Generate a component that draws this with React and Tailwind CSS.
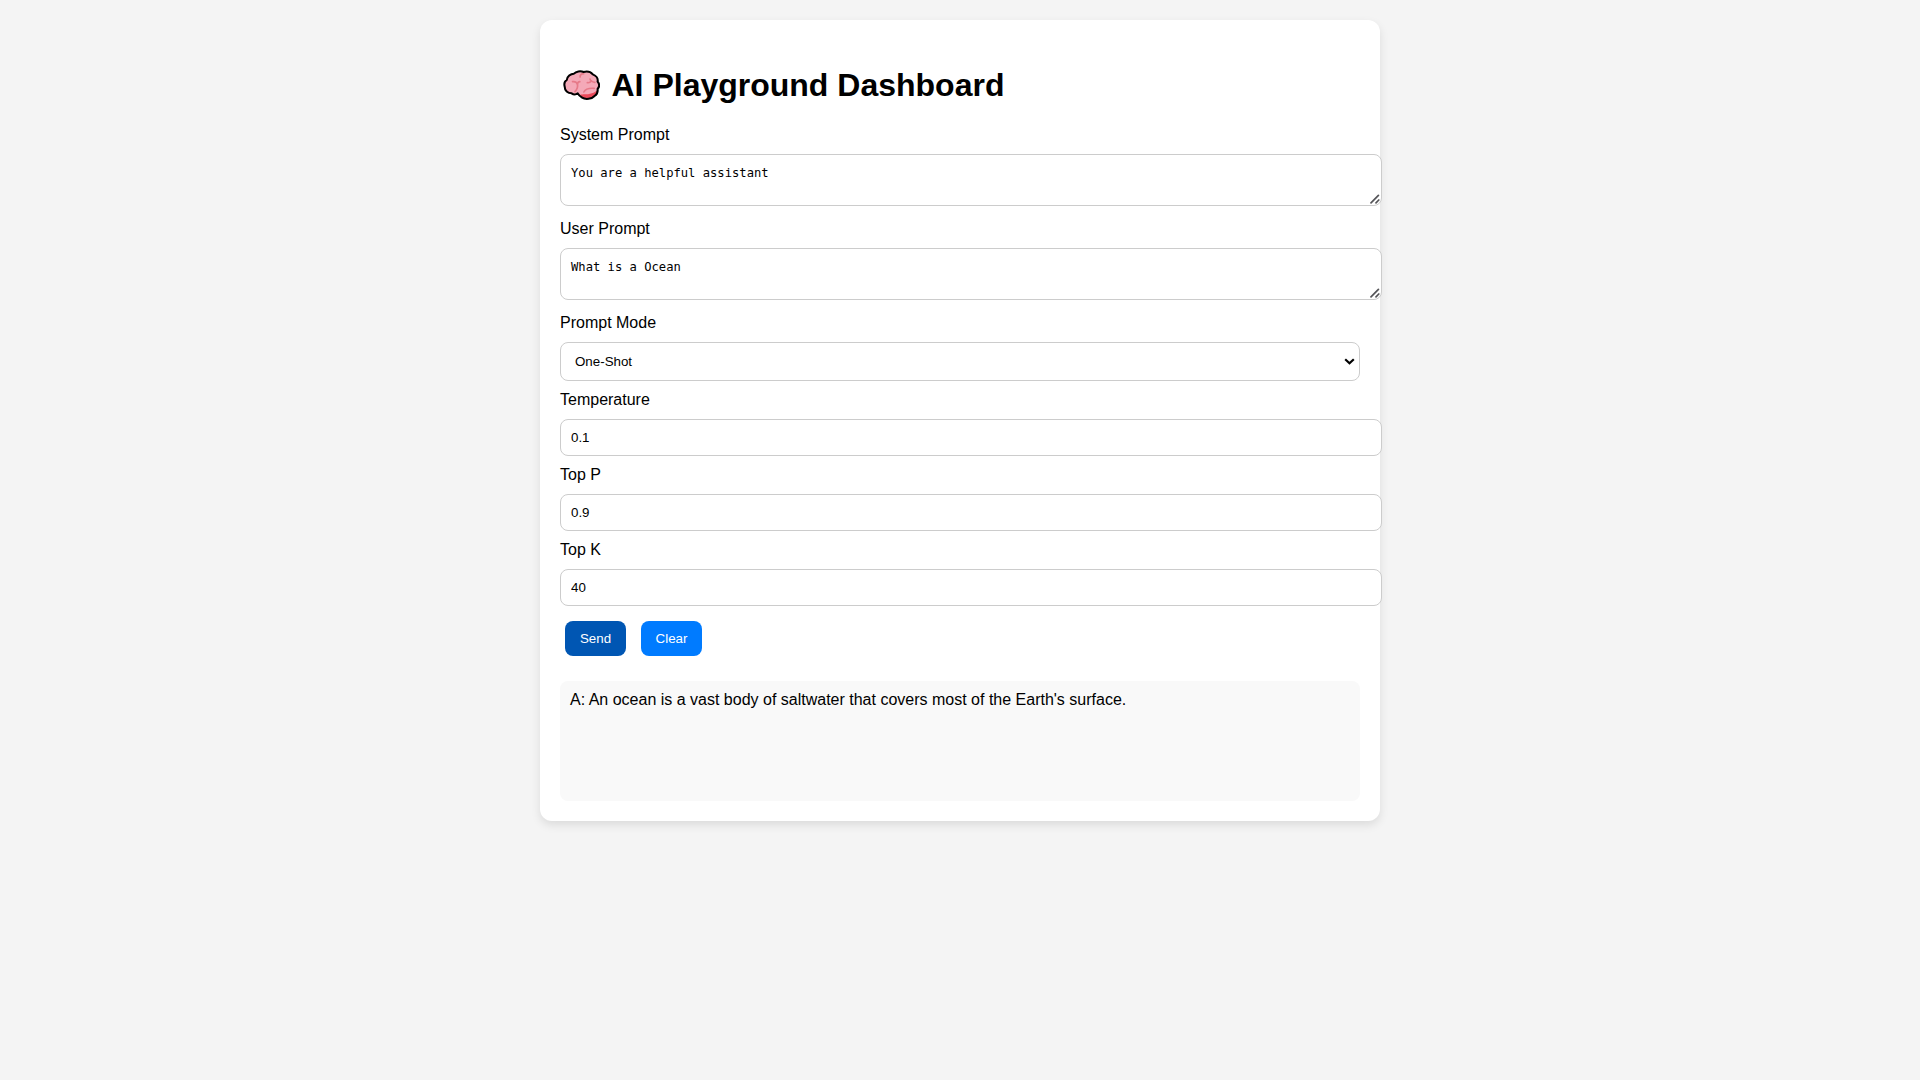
import React from "react";

function BrainIcon() {
  return (
    <svg className="block h-[30px] w-[37px] shrink-0" viewBox="0 0 108 90" preserveAspectRatio="none" fill="none">
      <path
        d="M5 50 C2 39 6 33 11 30 C12 20 22 11 32 11 C38 4 51 2 60 6 C70 3 81 6 87 13 C97 17 103 26 101 35 C107 42 106 51 101 57 C102 66 99 74 92 78 C84 87 66 90 56 83 C50 79 46 76 43 70 C37 75 29 73 25 70 C14 70 5 62 5 50 Z"
        fill="#f4a9b8"
      />
      <path d="M49 75 C56 72 66 73 73 73 C85 71 95 66 100 61 C101 68 98 75 92 79 C80 88 60 88 49 75 Z" fill="#ea4a5a" />
      <g stroke="#e67a89" strokeWidth="5" strokeLinecap="round" strokeLinejoin="round">
        <path d="M28 35 C34 34 40 37 42 42 C43 37 45 35 49 35" />
        <path d="M42 42 C44 50 41 58 35 65" />
        <path d="M60 11 C54 11 49 15 50 21" />
        <path d="M79 27 C80 34 87 36 93 37" />
        <path d="M83 33 C80 37 76 39 71 38" />
        <path d="M61 66 C66 56 78 54 91 55" />
      </g>
      <path
        d="M5 50 C2 39 6 33 11 30 C12 20 22 11 32 11 C38 4 51 2 60 6 C70 3 81 6 87 13 C97 17 103 26 101 35 C107 42 106 51 101 57 C102 66 99 74 92 78 C84 87 66 90 56 83 C50 79 46 76 43 70 C37 75 29 73 25 70 C14 70 5 62 5 50 Z"
        stroke="#000"
        strokeWidth="6"
        strokeLinejoin="round"
      />
    </svg>
  );
}

function Field({ label, children }) {
  return (
    <label className="flex flex-col gap-2.5">
      <span className="text-base leading-[18px]">{label}</span>
      {children}
    </label>
  );
}

function PromptArea({ value }) {
  return (
    <div className="relative mb-1 w-[822px]">
      <textarea
        rows={2}
        spellCheck={false}
        defaultValue={value}
        className="block h-[52px] w-full resize-none rounded-lg border border-[#ccc] bg-white px-2.5 pt-[11px] pb-[9px] font-['DejaVu_Sans_Mono','Liberation_Mono',monospace] text-[12.17px] leading-[15px] outline-none"
      />
      <svg
        className="pointer-events-none absolute right-[2px] bottom-[2px] h-[10px] w-[10px]"
        viewBox="0 0 10 10"
        fill="none"
        stroke="#555559"
        strokeWidth="1.7"
        strokeLinecap="round"
      >
        <path d="M1 8.8 L8.4 1.4 M6 8.8 L8.8 6" />
      </svg>
    </div>
  );
}

function NumberInput({ value }) {
  return (
    <input
      type="number"
      defaultValue={value}
      className="block h-[37px] w-[822px] rounded-lg border border-[#ccc] bg-white p-2.5 text-[13.333px] leading-[15px] outline-none"
    />
  );
}

export default function App() {
  return (
    <div className="min-h-screen bg-[#f4f4f4] pt-5 font-['Liberation_Sans',Arial,sans-serif] text-black">
      <main className="mx-auto h-[801px] w-[840px] rounded-xl bg-white px-5 shadow-[0_4px_10px_rgba(0,0,0,0.1)]">
        <h1 className="flex h-[106px] items-center pt-6 text-[32px] leading-[37px] font-bold">
          <span className="mr-[11.5px] mb-px ml-[3px]">
            <BrainIcon />
          </span>
          AI Playground Dashboard
        </h1>

        <form className="flex flex-col gap-2.5" onSubmit={(e) => e.preventDefault()}>
          <Field label="System Prompt">
            <PromptArea value="You are a helpful assistant" />
          </Field>
          <Field label="User Prompt">
            <PromptArea value="What is a Ocean" />
          </Field>
          <Field label="Prompt Mode">
            <div className="relative w-[800px]">
              <select
                defaultValue="One-Shot"
                className="block h-[39px] w-full appearance-none rounded-lg border border-[#ccc] bg-white pt-[9px] pr-8 pb-[11px] pl-3.5 text-[13.333px] outline-none"
              >
                <option>Zero-Shot</option>
                <option>One-Shot</option>
                <option>Multi-Shot</option>
              </select>
              <svg
                className="pointer-events-none absolute top-4 right-[5px] h-[7px] w-[11px]"
                viewBox="0 0 11 7"
                fill="none"
                stroke="#000"
                strokeWidth="2.2"
              >
                <path d="M1.2 1.2 L5.5 5.2 L9.8 1.2" />
              </svg>
            </div>
          </Field>
          <Field label="Temperature">
            <NumberInput value="0.1" />
          </Field>
          <Field label="Top P">
            <NumberInput value="0.9" />
          </Field>
          <Field label="Top K">
            <NumberInput value="40" />
          </Field>
        </form>

        <div className="mt-[15px] ml-[5px] flex gap-[15px] text-[13.333px] leading-[15px] text-white">
          <button className="h-[35px] w-[61px] rounded-lg bg-[#0056b3]">Send</button>
          <button className="h-[35px] w-[61px] rounded-lg bg-[#007bff]">Clear</button>
        </div>

        <div className="mt-[25px] h-[120px] rounded-lg bg-[#f9f9f9] p-2.5 text-base leading-[18px]">
          A: An ocean is a vast body of saltwater that covers most of the Earth's surface.
        </div>
      </main>
    </div>
  );
}
